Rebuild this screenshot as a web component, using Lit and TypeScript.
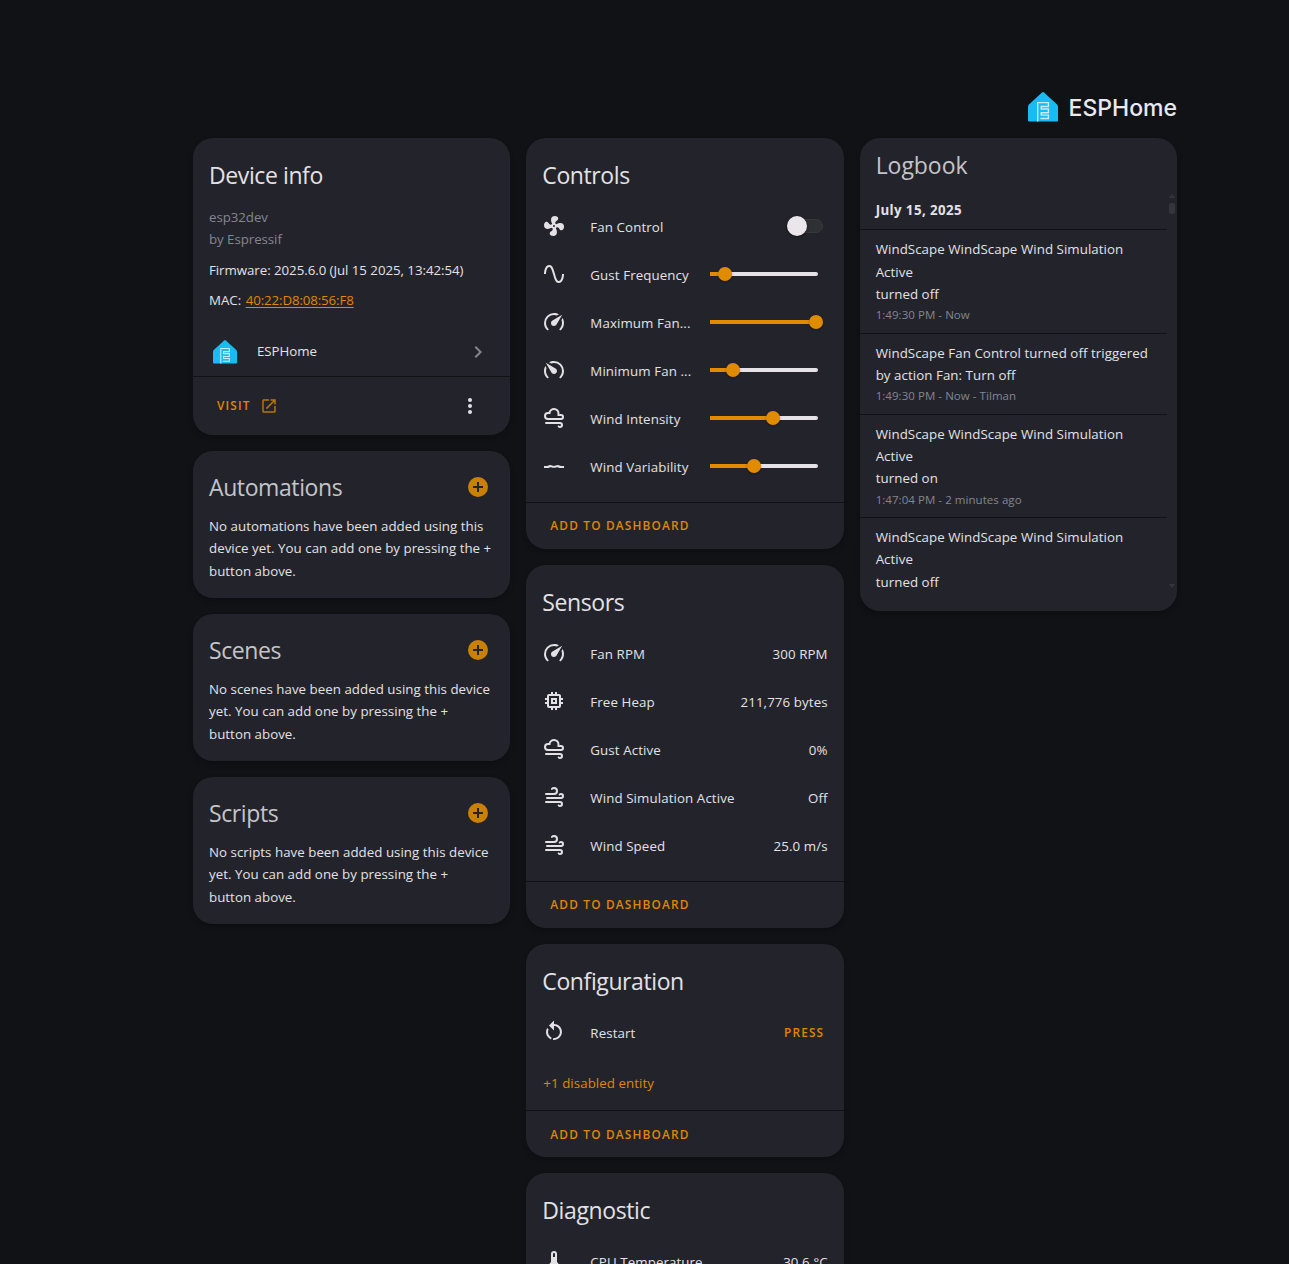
import { LitElement, html, css, svg, nothing } from "lit";
import { customElement, property } from "lit/decorators.js";

const ICONS: Record<string, string> = {
  fan: "M12,11A1,1 0 0,0 11,12A1,1 0 0,0 12,13A1,1 0 0,0 13,12A1,1 0 0,0 12,11M12.5,2C17,2 17.11,5.57 14.75,6.75C13.76,7.24 13.32,8.29 13.13,9.22C13.61,9.42 14.03,9.73 14.35,10.13C18.05,8.13 22.03,8.92 22.03,12.5C22.03,17 18.46,17.1 17.28,14.73C16.78,13.74 15.72,13.3 14.79,13.11C14.59,13.59 14.28,14 13.88,14.34C15.87,18.03 15.08,22 11.5,22C7,22 6.91,18.42 9.27,17.24C10.25,16.75 10.69,15.71 10.89,14.79C10.4,14.59 9.97,14.27 9.65,13.87C5.96,15.85 2,15.07 2,11.5C2,7 5.56,6.89 6.74,9.26C7.24,10.25 8.29,10.68 9.22,10.87C9.41,10.39 9.73,9.97 10.14,9.65C8.15,5.96 8.94,2 12.5,2Z",
  sine: "M16.5,21C13.5,21 12.31,16.76 11.05,12.28C10.14,9.04 9,5 7.5,5C4.11,5 4,11.93 4,12H2C2,11.63 2.06,3 7.5,3C10.5,3 11.71,7.25 12.97,11.74C13.83,14.8 15,19 16.5,19C19.94,19 20.03,12.07 20.03,12H22.03C22.03,12.37 21.97,21 16.5,21Z",
  speed: "M12,16A3,3 0 0,1 9,13C9,11.88 9.61,10.9 10.5,10.39L20.21,4.77L14.68,14.35C14.18,15.33 13.17,16 12,16M12,3C13.81,3 15.5,3.5 16.97,4.32L14.87,5.53C14,5.19 13,5 12,5A8,8 0 0,0 4,13C4,15.21 4.89,17.21 6.34,18.65H6.35C6.74,19.04 6.74,19.67 6.35,20.06C5.96,20.45 5.32,20.45 4.93,20.07V20.07C3.12,18.26 2,15.76 2,13A10,10 0 0,1 12,3M22,13C22,15.76 20.88,18.26 19.07,20.07V20.07C18.68,20.45 18.05,20.45 17.66,20.06C17.27,19.67 17.27,19.04 17.66,18.65V18.65C19.11,17.2 20,15.21 20,13C20,12 19.81,11 19.46,10.1L20.67,8C21.5,9.5 22,11.18 22,13Z",
  slow: "M12,16C13.66,16 15,14.66 15,13C15,11.88 14.39,10.9 13.5,10.39L3.79,4.77L9.32,14.35C9.82,15.33 10.83,16 12,16M12,3C10.19,3 8.5,3.5 7.03,4.32L9.13,5.53C10,5.19 11,5 12,5A8,8 0 0,1 20,13C20,15.21 19.11,17.21 17.66,18.65H17.65C17.26,19.04 17.26,19.67 17.65,20.06C18.04,20.45 18.68,20.45 19.07,20.07C20.88,18.26 22,15.76 22,13A10,10 0 0,0 12,3M2,13C2,15.76 3.12,18.26 4.93,20.07C5.32,20.45 5.95,20.45 6.34,20.06C6.73,19.67 6.73,19.04 6.34,18.65C4.89,17.2 4,15.21 4,13C4,12 4.19,11 4.54,10.1L3.33,8C2.5,9.5 2,11.18 2,13Z",
  cloud: "M6,6L6.69,6.06C7.32,3.72 9.46,2 12,2A5.5,5.5 0 0,1 17.5,7.5L17.42,8.45C17.88,8.16 18.42,8 19,8A3,3 0 0,1 22,11A3,3 0 0,1 19,14H6A4,4 0 0,1 2,10A4,4 0 0,1 6,6M6,8A2,2 0 0,0 4,10A2,2 0 0,0 6,12H19A1,1 0 0,0 20,11A1,1 0 0,0 19,10H15.5V7.5A3.5,3.5 0 0,0 12,4A3.5,3.5 0 0,0 8.5,7.5V8H6M18,18H4A1,1 0 0,1 3,17A1,1 0 0,1 4,16H18A3,3 0 0,1 21,19A3,3 0 0,1 18,22C17.17,22 16.42,21.66 15.88,21.12C15.5,20.73 15.5,20.1 15.88,19.71C16.27,19.32 16.9,19.32 17.29,19.71C17.47,19.89 17.72,20 18,20A1,1 0 0,0 19,19A1,1 0 0,0 18,18Z",
  wave: "M2,12H5C6,12 6.8,11 8.2,11C9.6,11 10.6,12 12,12C13.4,12 14.4,11 15.8,11C17.2,11 18,12 19,12H22V14H18.6C17.2,14 16.6,13.2 15.6,13.2C14.6,13.2 13.6,13.8 12,13.8C10.4,13.8 9.4,13.2 8.4,13.2C7.4,13.2 6.8,14 5.4,14H2Z",
  wind: "M4,10A1,1 0 0,1 3,9A1,1 0 0,1 4,8H12A2,2 0 0,0 14,6A2,2 0 0,0 12,4C11.45,4 10.95,4.22 10.59,4.59C10.2,5 9.56,5 9.17,4.59C8.78,4.2 8.78,3.56 9.17,3.17C9.9,2.45 10.9,2 12,2A4,4 0 0,1 16,6A4,4 0 0,1 12,10H4M19,12A1,1 0 0,0 20,11A1,1 0 0,0 19,10C18.72,10 18.47,10.11 18.29,10.29C17.9,10.68 17.27,10.68 16.88,10.29C16.5,9.9 16.5,9.27 16.88,8.88C17.42,8.34 18.17,8 19,8A3,3 0 0,1 22,11A3,3 0 0,1 19,14H5A1,1 0 0,1 4,13A1,1 0 0,1 5,12H19M18,18H4A1,1 0 0,1 3,17A1,1 0 0,1 4,16H18A3,3 0 0,1 21,19A3,3 0 0,1 18,22C17.17,22 16.42,21.66 15.88,21.12C15.5,20.73 15.5,20.1 15.88,19.71C16.27,19.32 16.9,19.32 17.29,19.71C17.47,19.89 17.72,20 18,20A1,1 0 0,0 19,19A1,1 0 0,0 18,18Z",
  memory: "M17,17H7V7H17M21,11V9H19V7C19,5.89 18.1,5 17,5H15V3H13V5H11V3H9V5H7C5.89,5 5,5.89 5,7V9H3V11H5V13H3V15H5V17A2,2 0 0,0 7,19H9V21H11V19H13V21H15V19H17A2,2 0 0,0 19,17V15H21V13H19V11M13,13H11V11H13M15,9H9V15H15V9Z",
  restart: "M12,4C14.1,4 16.1,4.8 17.6,6.3C20.7,9.4 20.7,14.5 17.6,17.6C15.8,19.5 13.3,20.2 10.9,19.9L11.4,17.9C13.1,18.1 14.9,17.5 16.2,16.2C18.5,13.9 18.5,10.1 16.2,7.7C15.1,6.6 13.5,6 12,6V10.6L7,5.6L12,0.6V4M6.3,17.6C3.7,15 3.3,11 5.1,7.9L6.6,9.4C5.5,11.6 5.9,14.4 7.8,16.2C8.3,16.7 8.9,17.1 9.6,17.4L9,19.4C8,19 7.1,18.4 6.3,17.6Z",
  thermometer: "M15 13V5A3 3 0 0 0 9 5V13A5 5 0 1 0 15 13M12 4A1 1 0 0 1 13 5V8H11V5A1 1 0 0 1 12 4Z",
  open: "M14,3V5H17.59L7.76,14.83L9.17,16.24L19,6.41V10H21V3M19,19H5V5H12V3H5C3.89,3 3,3.9 3,5V19A2,2 0 0,0 5,21H19A2,2 0 0,0 21,19V12H19V19Z",
  plus: "M17,13H13V17H11V13H7V11H11V7H13V11H17M12,2A10,10 0 0,0 2,12A10,10 0 0,0 12,22A10,10 0 0,0 22,12A10,10 0 0,0 12,2Z",
  dots: "M12,16A2,2 0 0,1 14,18A2,2 0 0,1 12,20A2,2 0 0,1 10,18A2,2 0 0,1 12,16M12,10A2,2 0 0,1 14,12A2,2 0 0,1 12,14A2,2 0 0,1 10,12A2,2 0 0,1 12,10M12,4A2,2 0 0,1 14,6A2,2 0 0,1 12,8A2,2 0 0,1 10,6A2,2 0 0,1 12,4Z",
  chevron: "M8.59,16.58L13.17,12L8.59,7.41L10,6L16,12L10,18L8.59,16.58Z",
};

interface Row {
  icon: string;
  label: string;
  value?: string;
  slider?: number;
  toggle?: boolean;
  press?: boolean;
}

const CONTROLS: Row[] = [
  { icon: "fan", label: "Fan Control", toggle: true },
  { icon: "sine", label: "Gust Frequency", slider: 15 },
  { icon: "speed", label: "Maximum Fan...", slider: 106 },
  { icon: "slow", label: "Minimum Fan ...", slider: 23 },
  { icon: "cloud", label: "Wind Intensity", slider: 63 },
  { icon: "wave", label: "Wind Variability", slider: 44 },
];
const SENSORS: Row[] = [
  { icon: "speed", label: "Fan RPM", value: "300 RPM" },
  { icon: "memory", label: "Free Heap", value: "211,776 bytes" },
  { icon: "cloud", label: "Gust Active", value: "0%" },
  { icon: "wind", label: "Wind Simulation Active", value: "Off" },
  { icon: "wind", label: "Wind Speed", value: "25.0 m/s" },
];
const LOG = [
  { lines: ["WindScape WindScape Wind Simulation", "Active", "turned off"], meta: "1:49:30 PM - Now" },
  { lines: ["WindScape Fan Control turned off triggered", "by action Fan: Turn off"], meta: "1:49:30 PM - Now - Tilman" },
  { lines: ["WindScape WindScape Wind Simulation", "Active", "turned on"], meta: "1:47:04 PM - 2 minutes ago" },
  { lines: ["WindScape WindScape Wind Simulation", "Active", "turned off"], meta: "" },
];
const EMPTY = [
  { title: "Automations", lines: ["No automations have been added using this", "device yet. You can add one by pressing the +", "button above."] },
  { title: "Scenes", lines: ["No scenes have been added using this device", "yet. You can add one by pressing the +", "button above."] },
  { title: "Scripts", lines: ["No scripts have been added using this device", "yet. You can add one by pressing the +", "button above."] },
];

@customElement("ui-icon")
class UiIcon extends LitElement {
  @property() name = "";
  static styles = css`
    :host { display: block; flex: none; width: 24px; height: 24px; }
    svg { display: block; width: 100%; height: 100%; fill: currentColor; }
  `;
  render() {
    return html`<svg viewBox="0 0 24 24">${svg`<path d=${ICONS[this.name]} />`}</svg>`;
  }
}

@customElement("brand-mark")
class BrandMark extends LitElement {
  static styles = css`
    :host { display: block; flex: none; }
    svg { display: block; width: 100%; height: 100%; }
  `;
  render() {
    return html`<svg viewBox="0 0 30 30">
      <path fill="#18bcf2" d="M14 .5Q15 -.4 16 .5L28.8 12.3Q30 13.5 30 15V28.2Q30 29.5 28.6 29.5H1.4Q0 29.5 0 28.2V15Q0 13.5 1.2 12.3Z" />
      <path fill="none" stroke="#c9ebf8" stroke-width="1.35"
        d="M9.7 29.5V10.6H20.4V14.5H13.2V17H20.4V20.7H13.2V23.1H20.4V26.5H12.4" />
    </svg>`;
  }
}

@customElement("entity-row")
class EntityRow extends LitElement {
  @property({ attribute: false }) row!: Row;
  static styles = css`
    :host { display: flex; align-items: center; height: 48px; padding: 0 16px; color: #e3e1e6; letter-spacing: 0.1px; }
    ui-icon { margin-top: -2px; }
    .label { flex: 1; padding-left: 24px; white-space: nowrap; }
    .slider { display: flex; align-items: center; width: 108px; height: 14px; margin: -2px 10px 0 0; position: relative; }
    .bar { flex: 1; height: 4px; border-radius: 0 2px 2px 0; background: #e6e1e6; overflow: hidden; }
    .fill { height: 4px; background: #e08b00; }
    .knob { position: absolute; top: 0; width: 14px; height: 14px; margin-left: -7px; border-radius: 50%; background: #e08b00; box-shadow: 0 1px 2px rgba(0, 0, 0, .4); }
    .switch { display: flex; align-items: center; box-sizing: border-box; width: 36px; height: 14px; border-radius: 7px; background: #2f3034; border: 1px solid #38383c; margin: -2px 5px 0 0; }
    .thumb { flex: none; width: 20px; height: 20px; margin-left: -1px; border-radius: 50%; background: #ebe6ec; box-shadow: 0 1px 3px rgba(0, 0, 0, .5); }
    .press { color: #e08600; font-size: 11.8px; font-weight: 600; letter-spacing: 1.15px; margin: -2px 3.5px 0 0; }
  `;
  render() {
    const r = this.row;
    return html`<ui-icon name=${r.icon}></ui-icon>
      <span class="label">${r.label}</span>
      ${r.value ? html`<span>${r.value}</span>` : nothing}
      ${r.toggle ? html`<div class="switch"><div class="thumb"></div></div>` : nothing}
      ${r.press ? html`<span class="press">PRESS</span>` : nothing}
      ${r.slider !== undefined
        ? html`<div class="slider">
            <div class="bar"><div class="fill" style="width:${r.slider}px"></div></div>
            <div class="knob" style="left:${r.slider}px"></div>
          </div>`
        : nothing}`;
  }
}

@customElement("app-root")
class AppRoot extends LitElement {
  static styles = css`
    :host { display: block; height: 1264px; overflow: hidden; background: #111216; color: #e3e1e6; font: 13.3px/22.4px "Open Sans", "Noto Sans", sans-serif; letter-spacing: 0.03px; }
    .page { width: 984px; margin-left: 193px; padding-top: 92px; }
    .brand { display: flex; align-items: center; justify-content: flex-end; height: 30px; margin-bottom: 16px; gap: 11px; }
    .brand brand-mark { width: 30px; height: 30px; }
    .word { font: 500 23px/30px Inter, sans-serif; letter-spacing: 0; color: #ebe8ee; padding-top: 2px; }
    .columns { display: grid; grid-template-columns: repeat(3, minmax(0, 1fr)); gap: 16px; align-items: start; }
    .col { display: flex; flex-direction: column; gap: 16px; }
    .card { display: flex; flex-direction: column; box-sizing: border-box; background: #23242b; border-radius: 20px; box-shadow: 0 3px 5px rgba(0, 0, 0, .22); }
    .title { font-size: 23px; line-height: 32px; letter-spacing: -0.4px; padding: 21px 16px 12px; }
    .dim { color: #c4c4c9; }
    .device { height: 297px; }
    .muted { color: #85858f; }
    .body { padding: 0 16px; white-space: nowrap; }
    .model { padding-top: 3px; letter-spacing: -0.06px; }
    .para { margin-top: 8px; letter-spacing: -0.05px; }
    .mac { letter-spacing: 0; }
    .link { color: #e08600; text-decoration: underline; text-underline-offset: 2px; letter-spacing: -0.12px; margin-left: 1px; }
    .integration { display: flex; align-items: center; height: 48px; padding: 0 20px; margin-top: 16px; letter-spacing: -0.06px; }
    .integration brand-mark { width: 24px; height: 24px; }
    .integration .name { flex: 1; padding-left: 20px; }
    .actions { display: flex; align-items: center; border-top: 1px solid #111216; height: 46px; padding: 0 24px; color: #e08600; font-size: 11.8px; font-weight: 600; letter-spacing: 1.2px; }
    .caption { margin-top: -2px; }
    .config .caption { margin-top: 0; }
    .tall { height: 58px; padding-right: 28px; box-sizing: content-box; }
    .tall ui-icon { width: 18px; height: 18px; margin-left: 9px; color: #b87408; }
    .tall .more { width: 24px; height: 24px; margin-left: auto; color: #e3e1e6; }
    .rows { padding-bottom: 11px; }
    .empty { height: 147px; }
    .head { display: flex; align-items: center; justify-content: space-between; height: 64px; padding: 4px 20px 0 16px; box-sizing: border-box; }
    .head .title { padding: 4px 0 0; }
    .head ui-icon { color: #c98003; margin-top: 4px; }
    .config { height: 213px; }
    .more-link { color: #e08600; padding: 15px 17px 16px; letter-spacing: 0.06px; }
    .log { height: 473px; overflow: hidden; }
    .log .title { padding: 11px 16px 13px; letter-spacing: -0.05px; }
    .scroll { display: flex; height: 400px; }
    .entries { flex: 1; overflow: hidden; white-space: nowrap; letter-spacing: 0.06px; }
    .date { font-weight: 700; height: 35.2px; line-height: 32px; padding: 0 16px; box-sizing: border-box; letter-spacing: 0.4px; }
    .entry { border-top: 1px solid #111216; padding: 8px 16px; }
    .meta { font-size: 11.5px; line-height: 19.2px; color: #85858f; letter-spacing: 0.05px; }
    .track { display: flex; flex-direction: column; align-items: center; width: 10px; }
    .up { border: 3px solid transparent; border-top: 0; border-bottom: 4px solid #35363b; }
    .thumb { width: 6px; height: 11px; border-radius: 2px; margin-top: 5px; background: #35363b; }
    .down { border: 3px solid transparent; border-bottom: 0; border-top: 4px solid #35363b; margin: auto 0 6px; }
  `;

  private add() {
    return html`<div class="actions"><span class="caption">ADD TO DASHBOARD</span></div>`;
  }

  render() {
    return html`<div class="page">
      <div class="brand"><brand-mark></brand-mark><span class="word">ESPHome</span></div>
      <div class="columns">
        <div class="col">
          <section class="card device">
            <div class="title">Device info</div>
            <div class="body muted model">esp32dev<br />by Espressif</div>
            <div class="body para">Firmware: 2025.6.0 (Jul 15 2025, 13:42:54)</div>
            <div class="body para mac">MAC: <span class="link">40:22:D8:08:56:F8</span></div>
            <div class="integration">
              <brand-mark></brand-mark><span class="name">ESPHome</span>
              <ui-icon class="muted" name="chevron"></ui-icon>
            </div>
            <div class="actions tall">VISIT<ui-icon name="open"></ui-icon><ui-icon class="more" name="dots"></ui-icon></div>
          </section>
          ${EMPTY.map((e) => html`<section class="card empty">
            <div class="head"><div class="title dim">${e.title}</div><ui-icon name="plus"></ui-icon></div>
            <div class="body">${e.lines.map((l) => html`<div>${l}</div>`)}</div>
          </section>`)}
        </div>
        <div class="col">
          <section class="card">
            <div class="title">Controls</div>
            <div class="rows">${CONTROLS.map((r) => html`<entity-row .row=${r}></entity-row>`)}</div>
            ${this.add()}
          </section>
          <section class="card">
            <div class="title">Sensors</div>
            <div class="rows">${SENSORS.map((r) => html`<entity-row .row=${r}></entity-row>`)}</div>
            ${this.add()}
          </section>
          <section class="card config">
            <div class="title">Configuration</div>
            <entity-row .row=${{ icon: "restart", label: "Restart", press: true }}></entity-row>
            <div class="more-link">+1 disabled entity</div>
            ${this.add()}
          </section>
          <section class="card">
            <div class="title">Diagnostic</div>
            <entity-row .row=${{ icon: "thermometer", label: "CPU Temperature", value: "30.6 °C" }}></entity-row>
          </section>
        </div>
        <div class="col">
          <section class="card log">
            <div class="title dim">Logbook</div>
            <div class="scroll">
              <div class="entries">
                <div class="date">July 15, 2025</div>
                ${LOG.map((e) => html`<div class="entry">
                  ${e.lines.map((l) => html`<div>${l}</div>`)}
                  ${e.meta ? html`<div class="meta">${e.meta}</div>` : nothing}
                </div>`)}
              </div>
              <div class="track"><div class="up"></div><div class="thumb"></div><div class="down"></div></div>
            </div>
          </section>
        </div>
      </div>
    </div>`;
  }
}
